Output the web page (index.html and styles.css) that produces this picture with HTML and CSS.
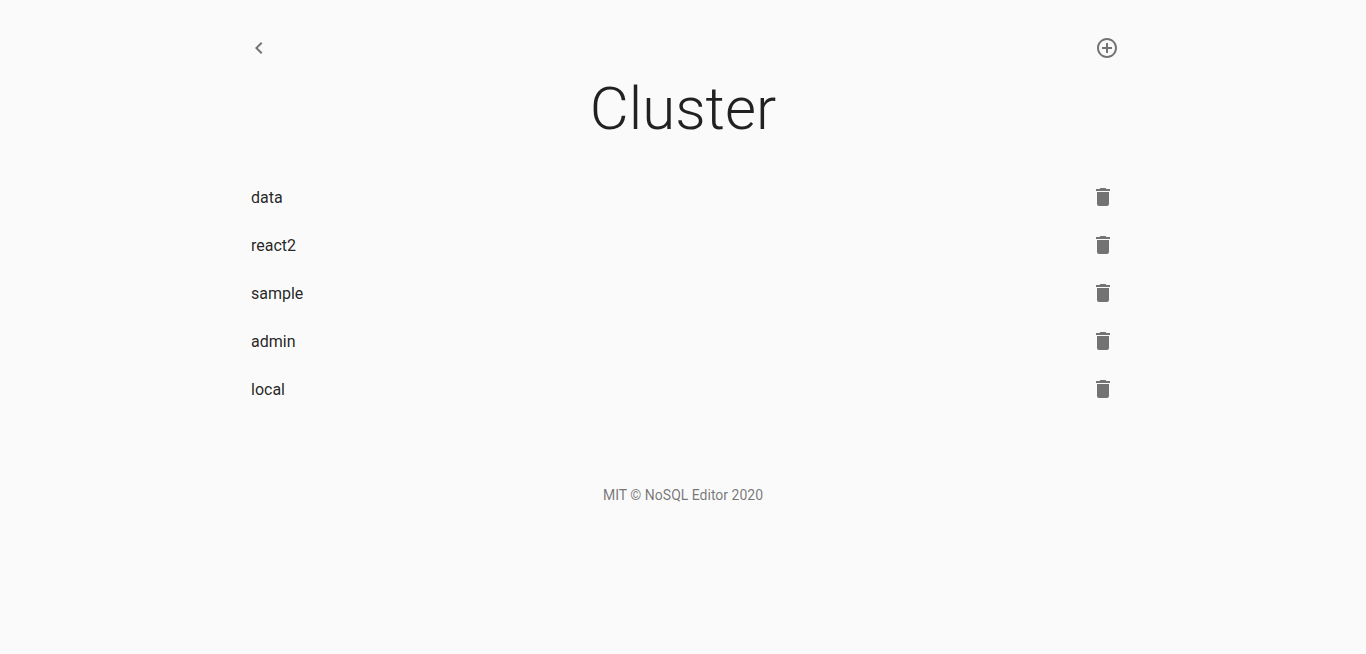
FILE: index.html
```html
<!DOCTYPE html>
<html lang="en">
<head>
<meta charset="utf-8">
<meta name="viewport" content="width=device-width, initial-scale=1">
<title>NoSQL Editor</title>
<link rel="stylesheet" href="styles.css">
</head>
<body>
<svg class="sprite" aria-hidden="true">
  <symbol id="icon-delete" viewBox="0 0 24 24"><path d="M6 19c0 1.1.9 2 2 2h8c1.1 0 2-.9 2-2V7H6v12zM19 4h-3.5l-1-1h-5l-1 1H5v2h14V4z"/></symbol>
</svg>
<div class="container">
  <header class="toolbar">
    <button class="icon-button" type="button" aria-label="Back"><svg class="icon" viewBox="0 0 24 24"><path d="M15.41 7.41L14 6l-6 6 6 6 1.41-1.41L10.83 12z"/></svg></button>
    <button class="icon-button" type="button" aria-label="Add database"><svg class="icon" viewBox="0 0 24 24"><path d="M13 7h-2v4H7v2h4v4h2v-4h4v-2h-4V7zm-1-5C6.48 2 2 6.48 2 12s4.480 10 10 10 10-4.480 10-10S17.520 2 12 2zm0 18c-4.410 0-8-3.590-8-8s3.590-8 8-8 8 3.590 8 8-3.590 8-8 8z"/></svg></button>
  </header>
  <main>
    <h1 class="title">Cluster</h1>
    <ul class="list">
      <li class="row"><a class="name" href="#data">data</a><button class="icon-button" type="button" aria-label="Delete data"><svg class="icon"><use href="#icon-delete"/></svg></button></li>
      <li class="row"><a class="name" href="#react2">react2</a><button class="icon-button" type="button" aria-label="Delete react2"><svg class="icon"><use href="#icon-delete"/></svg></button></li>
      <li class="row"><a class="name" href="#sample">sample</a><button class="icon-button" type="button" aria-label="Delete sample"><svg class="icon"><use href="#icon-delete"/></svg></button></li>
      <li class="row"><a class="name" href="#admin">admin</a><button class="icon-button" type="button" aria-label="Delete admin"><svg class="icon"><use href="#icon-delete"/></svg></button></li>
      <li class="row"><a class="name" href="#local">local</a><button class="icon-button" type="button" aria-label="Delete local"><svg class="icon"><use href="#icon-delete"/></svg></button></li>
    </ul>
  </main>
  <footer class="footer">MIT © NoSQL Editor 2020</footer>
</div>
</body>
</html>
```
FILE: styles.css
```css
* {
  box-sizing: border-box;
}

body {
  margin: 0;
  background: #fafafa;
  color: rgba(0, 0, 0, 0.87);
  font-family: Roboto, "Liberation Sans", sans-serif;
}

.sprite {
  display: none;
}

.container {
  max-width: 896px;
  margin: 0 auto;
  padding: 24px 0;
}

.toolbar {
  display: flex;
  justify-content: space-between;
  align-items: center;
}

.icon-button {
  display: flex;
  padding: 12px;
  border: 0;
  border-radius: 50%;
  background: none;
  color: rgba(0, 0, 0, 0.54);
  cursor: pointer;
}

.icon-button:hover {
  background: rgba(0, 0, 0, 0.04);
}

.icon {
  width: 24px;
  height: 24px;
  fill: currentColor;
}

.title {
  margin: 0;
  font-size: 60px;
  font-weight: 300;
  line-height: 74px;
  text-align: center;
}

.list {
  margin: 19px 0 0;
  padding: 8px 0;
  list-style: none;
}

.row {
  display: flex;
  justify-content: space-between;
  align-items: center;
  height: 48px;
  padding: 0 4px 0 16px;
}

.name {
  padding-top: 2px;
  color: inherit;
  font-size: 16px;
  line-height: 24px;
  text-decoration: none;
}

.footer {
  margin-top: 64px;
  color: rgba(0, 0, 0, 0.54);
  font-size: 14px;
  line-height: 20px;
  text-align: center;
}
```
